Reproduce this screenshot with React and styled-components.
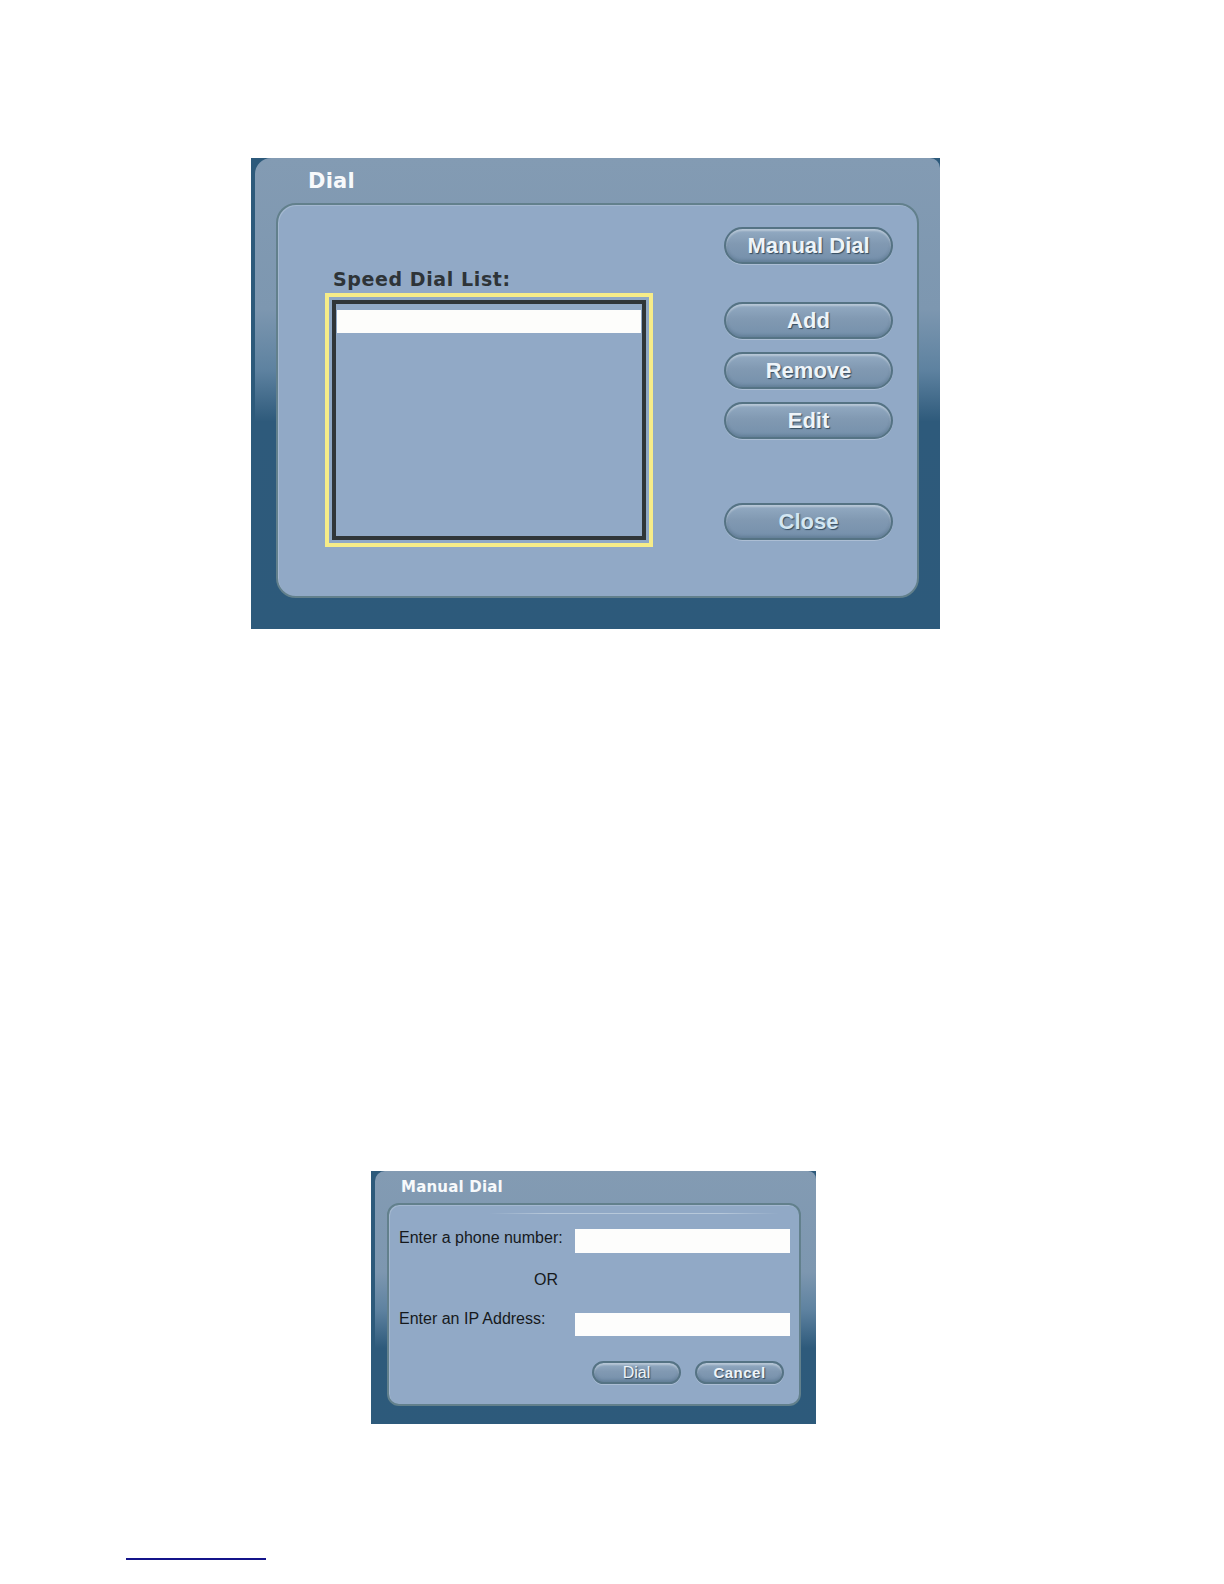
import React from 'react';
import styled, { createGlobalStyle } from 'styled-components';

const GlobalStyle = createGlobalStyle`
  html, body {
    margin: 0;
    padding: 0;
    background: #ffffff;
    overflow: hidden;
  }
  body {
    font-family: 'Liberation Sans', Arial, sans-serif;
  }
`;

const Page = styled.div`
  width: 100%;
  height: 1584px;
  padding-top: 158px;
  box-sizing: border-box;
  position: relative;
  overflow: hidden;
`;

// dark outer window, the lighter shell sits inside it
const Frame = styled.div`
  margin-left: ${({ left }) => left}px;
  margin-top: ${({ top }) => top || 0}px;
  width: ${({ width }) => width}px;
  height: ${({ height }) => height}px;
  background: #2d5a7b;
  padding-left: 4px;
  box-sizing: border-box;
  display: flex;
`;

const Shell = styled.div`
  flex: 1;
  display: flex;
  flex-direction: column;
  border-radius: ${({ small }) => (small ? '10px 8px 0 0' : '16px 10px 0 0')};
  background: linear-gradient(
    180deg,
    #839bb3 0%,
    #7d97b0 ${({ fade }) => fade[0]}%,
    #5e82a0 ${({ fade }) => fade[1]}%,
    #2e5a7b ${({ fade }) => fade[2]}%,
    #2d5a7b 100%
  );
  padding: ${({ pad }) => pad};
  box-sizing: border-box;
`;

const Title = styled.div`
  height: ${({ h }) => h}px;
  display: flex;
  align-items: center;
  padding-left: ${({ indent }) => indent}px;
  color: #f7f9fb;
  font-family: 'DejaVu Sans', Verdana, sans-serif;
  font-weight: bold;
  font-size: ${({ size }) => size}px;
  letter-spacing: 0.2px;
`;

const Panel = styled.div`
  position: relative;
  height: ${({ h }) => h}px;
  box-sizing: border-box;
  background: #91a9c6;
  border: 2px solid #62808c;
  border-radius: ${({ radius }) => radius}px;
  box-shadow: inset 1px 1px 0 rgba(255, 255, 255, 0.18);
`;

const DialBody = styled.div`
  display: flex;
  height: 100%;
  padding: 22px 0 0 47px;
  box-sizing: border-box;
`;

const ListColumn = styled.div`
  display: flex;
  flex-direction: column;
  padding-top: 40px;
  width: 328px;
`;

const ListLabel = styled.div`
  font-family: 'DejaVu Sans', Verdana, sans-serif;
  font-weight: bold;
  font-size: 19px;
  line-height: 24px;
  letter-spacing: 0.6px;
  color: #2e3438;
  padding-left: 8px;
  margin-bottom: 2px;
`;

const ListFrame = styled.div`
  width: 328px;
  height: 254px;
  box-sizing: border-box;
  border: 4px solid #f6ec88;
  padding: 3px;
  background: #8fa8c5;
`;

const ListBox = styled.div`
  height: 100%;
  box-sizing: border-box;
  border: 4px solid #2f3538;
  background: #91a9c6;
  padding: 6px 1px 0;
`;

const ListRow = styled.div`
  height: 23px;
  background: ${({ selected }) => (selected ? '#fdfdfb' : 'transparent')};
`;

const ButtonColumn = styled.div`
  display: flex;
  flex-direction: column;
  margin-left: 71px;
`;

const PillButton = styled.button`
  width: ${({ w }) => w}px;
  height: ${({ h }) => h}px;
  margin-top: ${({ gap }) => gap || 0}px;
  box-sizing: border-box;
  border: 2px solid #557384;
  border-radius: 999px;
  background: linear-gradient(180deg, #93abc3 0%, #8199b2 45%, #7590ab 100%);
  box-shadow: inset 0 2px 2px rgba(255, 255, 255, 0.35), inset 0 -2px 3px rgba(30, 60, 80, 0.2),
    0 1px 0 rgba(255, 255, 255, 0.25);
  color: ${({ tint }) => tint || '#eef4f9'};
  font-family: 'Liberation Sans', Arial, sans-serif;
  font-weight: ${({ light }) => (light ? 'normal' : 'bold')};
  font-size: ${({ size }) => size}px;
  letter-spacing: ${({ spacing }) => spacing || 0}px;
  text-shadow: 1px 1px 1px rgba(40, 62, 80, 0.85);
  padding: 0;
  line-height: 1;
  cursor: pointer;
`;

const FormBody = styled.div`
  padding: 24px 9px 20px 10px;
  height: 100%;
  box-sizing: border-box;
  display: flex;
  flex-direction: column;
`;

const Highlight = styled.div`
  position: absolute;
  top: 8px;
  left: 100px;
  width: 290px;
  height: 1px;
  background: linear-gradient(90deg, rgba(200, 215, 230, 0), #b7c8da 20%, #b7c8da 80%, rgba(200, 215, 230, 0));
`;

const FormGrid = styled.div`
  display: grid;
  grid-template-columns: 176px 215px;
  grid-template-rows: 24px 60px 23px;
`;

const FieldLabel = styled.label`
  font-size: 16px;
  line-height: 18px;
  color: #16191c;
  align-self: start;
  margin-top: ${({ shift }) => shift || 0}px;
  text-align: ${({ right }) => (right ? 'right' : 'left')};
  padding-right: ${({ right }) => (right ? '17px' : '0')};
  white-space: nowrap;
`;

const OrText = styled(FieldLabel)`
  align-self: center;
  margin-bottom: 6px;
`;

const TextInput = styled.input`
  width: 215px;
  height: ${({ h }) => h}px;
  box-sizing: border-box;
  border: none;
  background: #fdfdfc;
  padding: 0 4px;
  font-size: 15px;
  outline: none;
`;

const ButtonRow = styled.div`
  display: flex;
  justify-content: flex-end;
  gap: 14px;
  margin-top: 25px;
  margin-right: 6px;
`;

const FootLink = styled.a`
  position: absolute;
  top: 1558px;
  left: 126px;
  display: block;
  width: 140px;
  height: 0;
  border-bottom: 2px solid #14148a;
`;

const speedDial = [{ id: 1, name: '' }];

const App = () => (
  <>
    <GlobalStyle />
    <Page>
      <Frame left={251} width={689} height={471}>
        <Shell pad="0 21px 31px 21px" fade={[32, 45, 56]}>
          <Title h={45} indent={32} size={21}>
            Dial
          </Title>
          <Panel h={395} radius={20}>
            <DialBody>
              <ListColumn>
                <ListLabel>Speed Dial List:</ListLabel>
                <ListFrame>
                  <ListBox>
                    {speedDial.map((entry) => (
                      <ListRow key={entry.id} selected>
                        {entry.name}
                      </ListRow>
                    ))}
                  </ListBox>
                </ListFrame>
              </ListColumn>
              <ButtonColumn>
                <PillButton w={169} h={37} size={22}>
                  Manual Dial
                </PillButton>
                <PillButton w={169} h={37} size={22} gap={38}>
                  Add
                </PillButton>
                <PillButton w={169} h={37} size={22} gap={13}>
                  Remove
                </PillButton>
                <PillButton w={169} h={37} size={22} gap={13}>
                  Edit
                </PillButton>
                <PillButton w={169} h={37} size={22} gap={64} tint="#d3e6f2">
                  Close
                </PillButton>
              </ButtonColumn>
            </DialBody>
          </Panel>
        </Shell>
      </Frame>

      <Frame left={371} top={542} width={445} height={253}>
        <Shell small pad="0 15px 18px 12px" fade={[40, 55, 70]}>
          <Title h={32} indent={14} size={15}>
            Manual Dial
          </Title>
          <Panel h={203} radius={12}>
            <Highlight />
            <FormBody>
              <FormGrid>
                <FieldLabel>Enter a phone number:</FieldLabel>
                <TextInput h={24} />
                <OrText right>OR</OrText>
                <span />
                <FieldLabel shift={-3}>Enter an IP Address:</FieldLabel>
                <TextInput h={23} />
              </FormGrid>
              <ButtonRow>
                <PillButton w={89} h={23} size={16} light>
                  Dial
                </PillButton>
                <PillButton w={89} h={23} size={15} spacing={0.5}>
                  Cancel
                </PillButton>
              </ButtonRow>
            </FormBody>
          </Panel>
        </Shell>
      </Frame>
      <FootLink href="#" aria-label="link" />
    </Page>
  </>
);

export default App;
